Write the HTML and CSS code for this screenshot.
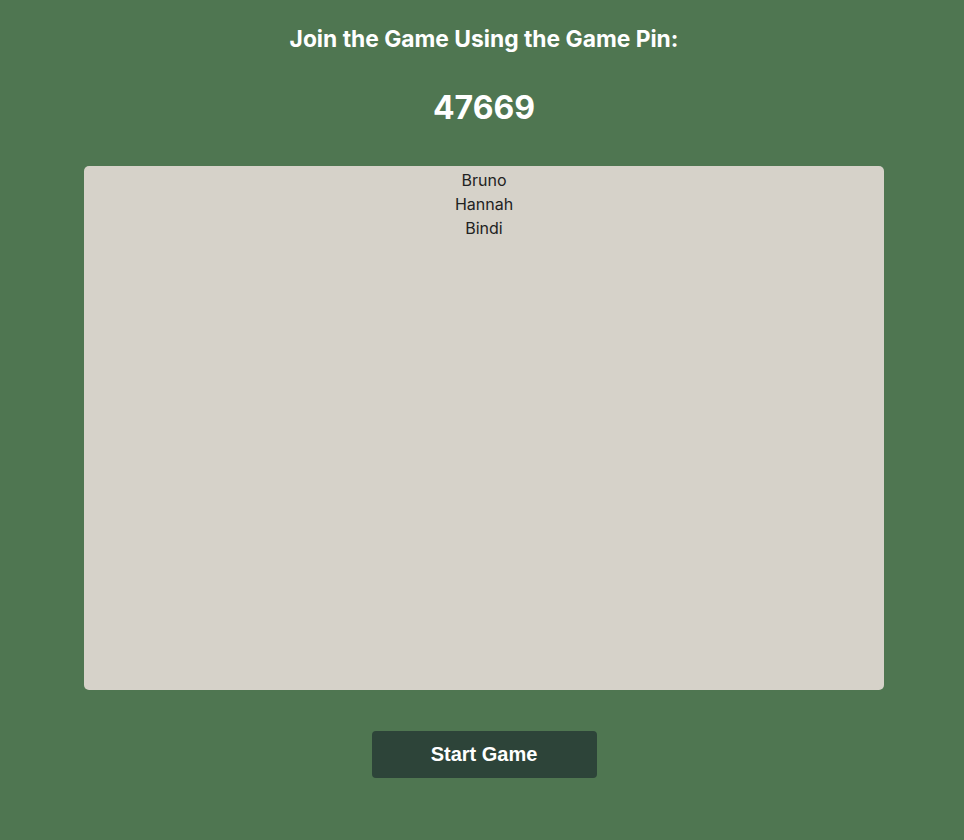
FILE: index.html
```html
<!DOCTYPE html>
<html>
<head>
<meta charset="utf-8">
<link rel="stylesheet" href="styles.css">
</head>
<body>
<main class="lobby">
  <h1 class="title">Join the Game Using the Game Pin:</h1>
  <h2 class="pin">47669</h2>
  <div class="players">
    <div class="player">Bruno</div>
    <div class="player">Hannah</div>
    <div class="player">Bindi</div>
  </div>
  <button class="start">Start Game</button>
</main>
</body>
</html>
```
FILE: styles.css
```css
html, body {
  margin: 0;
  padding: 0;
  background: #4f7651;
  font-family: Inter, "Noto Sans", sans-serif;
}
.lobby {
  display: flex;
  flex-direction: column;
  align-items: center;
  padding-top: 26px;
  padding-left: 4px;
}
.title {
  margin: 0;
  font-size: 22.8px;
  line-height: 26px;
  font-weight: 700;
  color: #ffffff;
}
.pin {
  margin: 37px 0 0;
  font-size: 32px;
  line-height: 38px;
  font-weight: 700;
  color: #ffffff;
}
.players {
  margin-top: 39px;
  width: 800px;
  height: 524px;
  box-sizing: border-box;
  padding-top: 2px;
  background: #d6d2c9;
  border-radius: 5px;
  display: flex;
  flex-direction: column;
  align-items: center;
}
.player {
  font-size: 16px;
  line-height: 24px;
  color: #222222;
}
.start {
  margin-top: 41px;
  width: 225px;
  height: 47px;
  border: none;
  border-radius: 4px;
  background: #2d4439;
  color: #ffffff;
  font-family: "Liberation Sans", Arial, sans-serif;
  font-size: 20px;
  font-weight: 700;
  cursor: pointer;
}
```
